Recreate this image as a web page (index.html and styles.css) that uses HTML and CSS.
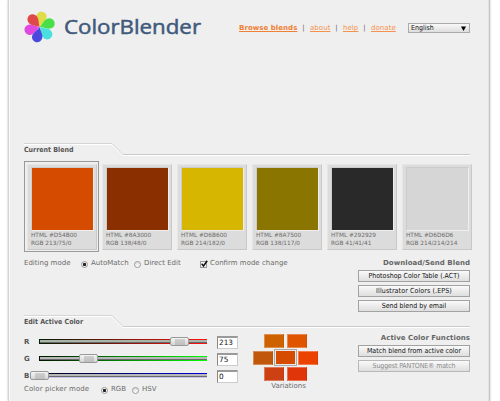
FILE: index.html
```html
<!DOCTYPE html>
<html lang="en">
<head>
<meta charset="utf-8">
<title>ColorBlender</title>
<link rel="stylesheet" href="styles.css">
</head>
<body>
<main class="page">
  <header class="header">
    <svg class="logo" width="182" height="36" viewBox="0 0 182 36">
      <g transform="translate(15.7 17) scale(1.04)">
        <path d="M0 0 C-1-3-5-6-5-10 A5 5 0 0 1 5-10 C5-6 1-3 0 0Z" fill="#dfdc49" transform="rotate(10)"/>
        <path d="M0 0 C-1-3-5-6-5-10 A5 5 0 0 1 5-10 C5-6 1-3 0 0Z" fill="#49df49" transform="rotate(70)"/>
        <path d="M0 0 C-1-3-5-6-5-10 A5 5 0 0 1 5-10 C5-6 1-3 0 0Z" fill="#49dfdf" transform="rotate(134)"/>
        <path d="M0 0 C-1-3-5-6-5-10 A5 5 0 0 1 5-10 C5-6 1-3 0 0Z" fill="#4949df" transform="rotate(194)"/>
        <path d="M0 0 C-1-3-5-6-5-10 A5 5 0 0 1 5-10 C5-6 1-3 0 0Z" fill="#df49df" transform="rotate(255)"/>
        <path d="M0 0 C-1-3-5-6-5-10 A5 5 0 0 1 5-10 C5-6 1-3 0 0Z" fill="#df4949" transform="rotate(317)"/>
      </g>
      <text class="wordmark" x="40" y="24.3" textLength="137" lengthAdjust="spacingAndGlyphs">ColorBlender</text>
    </svg>
    <nav class="nav">
      <a class="strong" href="#">Browse blends</a><i>|</i><a class="l1" href="#">about</a><i>|</i><a class="l2" href="#">help</a><i>|</i><a class="l3" href="#">donate</a>
    </nav>
    <div class="select"><span>English</span><svg width="5" height="5"><path d="M0 0.5H5L2.5 5Z"/></svg></div>
  </header>

  <h2 class="section"><span>Current Blend</span>
    <svg width="446" height="13"><path class="hi" d="M0 1.5H87.5L99 12.5H446"/><path class="thin" d="M0 .5H88L99 11.5"/><path class="line" d="M99 11.5H446"/></svg>
  </h2>
  <div class="blend">
    <div class="card active"><b class="chip c1"></b><p>HTML #D54B00</p><p>RGB 213/75/0</p></div>
    <div class="card"><b class="chip c2"></b><p>HTML #8A3000</p><p>RGB 138/48/0</p></div>
    <div class="card"><b class="chip c3"></b><p>HTML #D6B600</p><p>RGB 214/182/0</p></div>
    <div class="card"><b class="chip c4"></b><p>HTML #8A7500</p><p>RGB 138/117/0</p></div>
    <div class="card"><b class="chip c5"></b><p>HTML #292929</p><p>RGB 41/41/41</p></div>
    <div class="card"><b class="chip c6"></b><p>HTML #D6D6D6</p><p>RGB 214/214/214</p></div>
  </div>

  <div class="modes">
    <div class="options">
      <span class="caption">Editing mode</span>
      <label class="auto"><b class="radio on"></b><span>AutoMatch</span></label>
      <label class="direct"><b class="radio"></b><span>Direct Edit</span></label>
      <label class="confirm"><svg class="check" width="9" height="9"><rect x=".5" y="2.5" width="6" height="6"/><path d="M1.7 4.8L3.5 7 7.2 1.7"/></svg><span>Confirm mode change</span></label>
    </div>
    <div class="actions">
      <h3>Download/Send Blend</h3>
      <button>Photoshop Color Table (.ACT)</button>
      <button class="eps">Illustrator Colors (.EPS)</button>
      <button>Send blend by email</button>
    </div>
  </div>

  <h2 class="section"><span>Edit Active Color</span>
    <svg width="446" height="13"><path class="hi" d="M0 1.5H87.5L99 12.5H446"/><path class="thin" d="M0 .5H88L99 11.5"/><path class="line" d="M99 11.5H446"/></svg>
  </h2>
  <div class="editor">
    <div class="sliders">
      <div class="row"><span>R</span><div class="track tr"><b class="thumb" style="left:131px"></b></div><div class="value">213</div></div>
      <div class="row"><span>G</span><div class="track tg"><b class="thumb" style="left:40px"></b></div><div class="value">75</div></div>
      <div class="row"><span>B</span><div class="track tb"><b class="thumb" style="left:-9px"></b></div><div class="value">0</div></div>
      <div class="picker"><span class="caption">Color picker mode</span>
        <label class="rgb"><b class="radio on"></b><span>RGB</span></label>
        <label class="hsv"><b class="radio"></b><span>HSV</span></label></div>
    </div>
    <div class="variations">
      <div class="vrow"><b class="v1"></b><b class="v2"></b></div>
      <div class="vrow mid"><b class="v3"></b><b class="v4"></b><b class="v5"></b></div>
      <div class="vrow"><b class="v6"></b><b class="v7"></b></div>
      <p>Variations</p>
    </div>
    <div class="actions">
      <h3>Active Color Functions</h3>
      <button>Match blend from active color</button>
      <button class="pantone" disabled>Suggest PANTONE® match</button>
    </div>
  </div>
</main>
</body>
</html>
```
FILE: styles.css
```css
* { box-sizing: border-box; margin: 0; padding: 0; }
body { width: 500px; height: 401px; overflow: hidden; background: #fff; color: #6b6b6b; font: 7px/9px "DejaVu Sans", sans-serif; }
svg { display: block; }
.page { width: 482px; height: 401px; margin-left: 8px; padding: 0 19px 0 15px; background: #efefef; border-left: 1px solid #d4d4d4; border-right: 1px solid #c8c8c8; box-shadow: inset 1px 0 #fafafa, inset -1px 0 #e2e2e2, 0 0 2px #bbb; }

.header { display: flex; height: 143px; padding-top: 10px; }
.logo { flex: none; overflow: visible; }
.wordmark { font: 20px "Open Sans", sans-serif; fill: #405a7c; stroke: #405a7c; stroke-width: .5; }
.nav { display: flex; flex: none; width: 201px; height: 9px; margin: 14px 0 0 33px; letter-spacing: .05px; white-space: nowrap; }
.nav a { color: #f5924e; text-decoration: underline; }
.nav .strong { width: 58px; font-weight: bold; color: #f08032; }
.nav i { width: 13px; text-align: center; font-style: normal; }
.nav .l1 { width: 20px; }
.nav .l2 { width: 15px; }
.select { display: flex; flex: none; justify-content: space-between; align-items: center; width: 62px; height: 10px; margin: 13px 0 0 -32px; padding: 0 3px 0 2px; border: 1px solid #aaa; background: linear-gradient(#f8f8f8, #dedede); color: #111; font-stretch: condensed; }

.section { position: relative; height: 13px; font-size: 7px; font-stretch: condensed; line-height: 15px; color: #555; }
.section svg { position: absolute; left: 0; top: 0; }
.section path { fill: none; }
.section .hi { stroke: #fff; }
.section .thin { stroke: #d5d5d5; }
.section .line { stroke: #cacaca; }

.blend { display: flex; gap: 5px; height: 96px; padding: 8px 0 0 3px; }
.card { position: relative; flex: none; width: 70px; height: 86px; padding: 2px 4px; background: #dcdcdc; border: 1px solid #e6e6e6; border-right-color: #c8c8c8; border-bottom-color: #c8c8c8; font-size: 5.8px; line-height: 7.5px; white-space: nowrap; }
.card.active::after { content: ""; position: absolute; inset: -4px -3px -3px -4px; border: 1px solid #999; }
.card p { margin-left: -1px; }
.chip { display: block; width: 63px; height: 64px; margin: 0 0 1px -1px; border: 1px solid #ccc; border-right-color: #eee; border-bottom-color: #eee; }
.c1 { background: #d54b00; }
.c2 { background: #8a3000; }
.c3 { background: #d6b600; }
.c4 { background: #8a7500; }
.c5 { background: #292929; }
.c6 { background: #d6d6d6; }

.modes { display: flex; justify-content: space-between; height: 63px; padding-top: 7px; }
.options, .picker { display: flex; }
label { display: flex; gap: 3px; white-space: nowrap; }
.caption { width: 57px; white-space: nowrap; }
.radio { flex: none; width: 7px; height: 7px; margin-top: 2px; border: 1px solid #999; border-radius: 50%; background: linear-gradient(#ddd, #fff); }
.radio.on { background: radial-gradient(circle, #222 0 1.3px, #eee 2px); }
.auto { width: 53px; }
.direct { width: 66px; }
.check rect { fill: #f6f6f6; stroke: #999; }
.check path { fill: none; stroke: #111; stroke-width: 1.5; }
label.confirm { gap: 1px; }

.actions { display: flex; flex-direction: column; align-items: flex-end; }
h3 { height: 11px; font-size: 7px; line-height: 9px; letter-spacing: .04px; color: #666; white-space: nowrap; }
.modes h3 { height: 12px; margin-top: -1px; line-height: 10px; }
.modes .actions { height: 56px; }
button { flex: none; width: 112px; height: 12px; margin-bottom: 3px; border: 1px solid #a2a2a2; background: linear-gradient(#fafafa, #dedede); color: #111; font: 7px/9px "DejaVu Sans", sans-serif; font-stretch: condensed; white-space: nowrap; }
.eps { letter-spacing: .12px; }
.pantone { letter-spacing: -.13px; }
button:disabled { color: #8c8c8c; border-color: #b8b8b8; }

.editor { display: flex; }
.sliders { width: 228px; padding-top: 6px; }
.row { display: flex; align-items: center; height: 17px; color: #555; }
.row span { width: 15px; font-weight: bold; }
.track { position: relative; width: 168px; height: 5px; margin-bottom: 2px; }
.track::before { content: ""; display: block; position: absolute; inset: 1px; right: 0; background: linear-gradient(#b8b8b8 2px, #6a6a6a 2px); }
.tr { background: linear-gradient(90deg, #001c00, #f11); }
.tr::before { background: linear-gradient(#a8b4a8 2px, #6a6a6a 2px); }
.tg { background: linear-gradient(90deg, #001000, #00ff00); }
.tb { background: linear-gradient(#0000 4px, #c8c8ee 4px), linear-gradient(90deg, #000011, #0000dd); }
.thumb { position: absolute; top: -2px; width: 19px; height: 9px; border: 1px solid #999; border-radius: 2px; background: linear-gradient(#f5f5f5, #d5d5d5); }
.thumb::after { content: ""; display: block; width: 10px; height: 6px; margin: 1px 0 0 4px; background: radial-gradient(circle, #999 .4px, transparent .9px) 0 0/2px 2px; }
.value { width: 21px; height: 13px; margin-left: 10px; padding-left: 1px; border: 1px solid #ccc; border-top: 2px solid #999; border-left-color: #888; background: #fff; color: #111; font-size: 7.3px; line-height: 10px; }
.picker .caption { width: 77px; letter-spacing: .08px; }
.rgb { width: 31px; }
.variations { width: 66px; padding-top: 6px; text-align: center; }
.variations p { margin-top: 1px; padding-left: 7px; }
.vrow { display: flex; justify-content: center; gap: 3px; height: 14px; }
.vrow b { width: 20px; height: 14px; border: 1px solid rgba(255,255,255,.3); border-right-color: rgba(0,0,0,.05); }
.vrow.mid { gap: 1px; height: 17px; margin: 1px 0; align-items: center; }
.vrow.mid .v4 { width: 23px; height: 17px; border: 1px solid #aaa; box-shadow: inset 0 0 0 1px #e8e8e8; }
.v1 { background: #ce6200; }
.v2 { background: #e05600; }
.v3 { background: #c1570b; }
.v4 { background: #d54b00; }
.v5 { background: #eb4200; }
.v6 { background: #cc4013; }
.v7 { background: #e03409; }
.editor .actions { margin-left: auto; padding-top: 6px; }
```
